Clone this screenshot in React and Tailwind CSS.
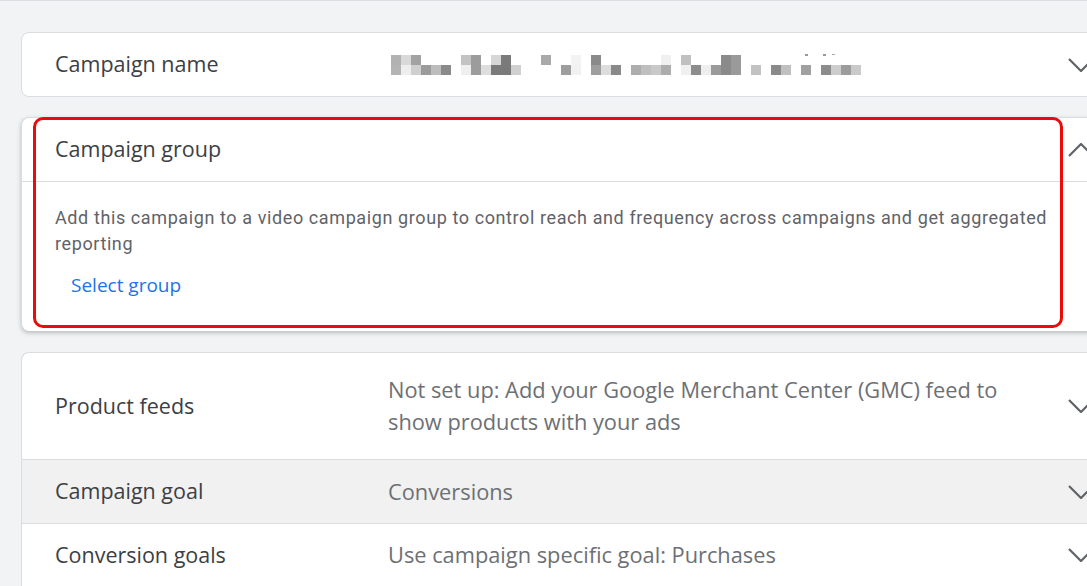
import React from 'react';

const TITLE = { fontFamily: '"Open Sans", "Noto Sans", sans-serif' };
const BODY = { fontFamily: 'Roboto, "Noto Sans", sans-serif' };

// pixelated (blurred) campaign name: [x offset, top colour, bottom colour]
const PIXELS = [
  [0, '#b2b2b2', '#b4b4b4'], [10, '#d9d9d9', '#eeeeee'], [20, '#a2a2a2', '#cfcfcf'],
  [30, null, '#9b9b9b'], [40, null, '#bdbdbd'], [50, null, '#8a8a8a'],
  [70, '#c3c3c3', '#efefef'], [80, '#9c9c9c', '#9c9c9c'], [90, null, '#dedede'],
  [100, '#d6d6d6', '#7a7a7a'], [110, '#7a7a7a', '#7a7a7a'], [120, null, '#d0d0d0'],
  [150, '#a9a9a9', null], [170, null, '#9d9d9d'], [180, '#f3f3f3', '#f1f1f1'],
  [200, '#8a8a8a', '#9e9e9e'], [210, null, '#dddddd'], [220, null, '#898989'],
  [240, null, '#adadad'], [250, null, '#bfbfbf'], [260, null, '#c9c9c9'], [270, '#f0f0f0', '#adadad'],
  [290, '#c0c0c0', '#f0f0f0'], [300, null, '#8c8c8c'], [310, null, '#eeeeee'],
  [320, null, '#9a9a9a'], [330, '#8a8a8a', '#8a8a8a'], [340, '#9a9a9a', '#9a9a9a'],
  [360, null, '#c2c2c2'], [380, null, '#8a8a8a'], [390, null, '#c0c0c0'],
  [410, null, '#a0a0a0'], [430, null, '#8c8c8c'], [440, null, '#cdcdcd'],
  [450, null, '#9c9c9c'], [460, null, '#cacaca'],
];

function Blurred() {
  return (
    <svg width="470" height="22" viewBox="0 0 470 22" className="block">
      {PIXELS.map(([x, t, b]) => (
        <g key={x}>
          {t && <rect x={x} y="1" width="10" height="10" fill={t} />}
          {b && <rect x={x} y="11" width="10" height="10" fill={b} />}
        </g>
      ))}
      <rect x="414" y="-1" width="3" height="3" fill="#999" />
      <rect x="432" y="-1" width="3" height="3" fill="#999" />
      <rect x="441" y="-2" width="3" height="3" fill="#aaa" />
    </svg>
  );
}

function Chevron({ up }) {
  return (
    <svg width="26" height="14" viewBox="0 0 26 14" fill="none" className="block">
      <polyline
        points={up ? '1,13 13,1 25,13' : '1,1 13,13 25,1'}
        stroke="#5f6368"
        strokeWidth="2.2"
      />
    </svg>
  );
}

function Row({ label, children, className = '', up }) {
  return (
    <div className={`flex items-center ${className}`}>
      <div className="w-[366px] shrink-0 pl-[33px] text-[21.5px] text-[#3c4043]" style={TITLE}>
        {label}
      </div>
      <div className="w-[680px] shrink-0 pr-[30px] text-[21.8px] leading-[32px] text-[#6d7074]" style={TITLE}>
        {children}
      </div>
      <div className="shrink-0">
        <Chevron up={up} />
      </div>
    </div>
  );
}

export default function App() {
  return (
    <div className="h-[586px] w-[1087px] overflow-hidden border-t border-[#dadce0] bg-[#f1f3f4]">
      <div className="ml-[21px] flex w-[1110px] flex-col pt-[31px]">
        <Row label="Campaign name" className="h-[65px] rounded-tl-lg rounded-bl-lg border border-[#dadce0] bg-white">
          <div className="ml-[3px]">
            <Blurred />
          </div>
        </Row>

        <div className="relative mt-[20px] rounded-tl-lg rounded-bl-lg border-l border-t border-[#dadce0] bg-white shadow-[0_2px_4px_rgba(60,64,67,0.3)]">
          <div className="flex h-[64px] items-center border-b border-[#dadce0]">
            <div className="w-[1046px] shrink-0 pl-[33px] text-[21.5px] text-[#3c4043]" style={TITLE}>
              Campaign group
            </div>
            <Chevron up />
          </div>
          <div className="pl-[33px] pr-[60px] pt-[23px] pb-[33px]">
            <p className="text-[18px] leading-[26px] tracking-[0.6px] text-[#5f6368]" style={BODY}>
              Add this campaign to a video campaign group to control reach and frequency across campaigns and get aggregated reporting
            </p>
            <button
              className="mt-[16px] ml-[16px] text-[19px] font-medium leading-[24px] text-[#1a73e8]"
              style={TITLE}
            >
              Select group
            </button>
          </div>
          <div className="pointer-events-none absolute left-[11px] top-[-1px] h-[211px] w-[1030px] rounded-[10px] border-[3px] border-[#ec0a0a]" />
        </div>

        <div className="mt-[21px] rounded-tl-lg border-l border-t border-[#dadce0] bg-white">
          <Row label="Product feeds" className="h-[107px] border-b border-[#dadce0]">
            Not set up: Add your Google Merchant Center (GMC) feed to show products with your ads
          </Row>
          <Row label="Campaign goal" className="h-[64px] border-b border-[#dadce0] bg-[#f1f1f1]">
            Conversions
          </Row>
          <Row label="Conversion goals" className="h-[64px] pb-[2px]">
            Use campaign specific goal: Purchases
          </Row>
          <div className="h-[40px]" />
        </div>
      </div>
    </div>
  );
}
